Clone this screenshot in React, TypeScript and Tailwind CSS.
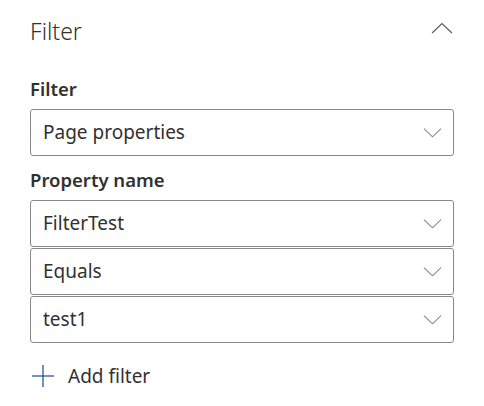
const rows = ['FilterTest', 'Equals', 'test1']

function Chevron({ up = false, className = '' }: { up?: boolean; className?: string }) {
  return (
    <svg viewBox="0 0 20 10" className={className} fill="none" stroke="currentColor" strokeWidth={1.1}>
      {up ? <polyline points="1,9.5 10,1 19,9.5" /> : <polyline points="1,0.5 10,9 19,0.5" />}
    </svg>
  )
}

function Dropdown({ value, className = '' }: { value: string; className?: string }) {
  return (
    <div
      className={`flex h-[47px] items-center justify-between rounded-[3px] border border-[#8a8886] bg-white pl-[12px] pr-[11px] ${className}`}
    >
      <span className="text-[19px] text-[#323130]">{value}</span>
      <Chevron className="h-[10px] w-[19px] text-[#8a8886]" />
    </div>
  )
}

export default function App() {
  return (
    <div className="h-[406px] w-[484px] bg-white px-[30px] pt-[13px] font-['Noto_Sans',sans-serif] text-[#323130]">
      <div className="flex items-center justify-between">
        <h1 className="text-[23px] font-light leading-[36px] text-[#323130]">Filter</h1>
        <Chevron up className="mr-[1px] mb-[7px] h-[12px] w-[22px] text-[#605e5c]" />
      </div>
      <div className="mt-[27px] text-[18.5px] font-semibold leading-[26px]">Filter</div>
      <Dropdown value="Page properties" className="mt-[7px]" />
      <div className="mt-[11px] text-[18.5px] font-semibold leading-[26px]">Property name</div>
      <div className="mt-[7px] flex flex-col gap-[1px]">
        {rows.map((r) => (
          <Dropdown key={r} value={r} />
        ))}
      </div>
      <button type="button" className="mt-[20px] flex h-[26px] items-center gap-[14px] text-[19px] text-[#323130]">
        <svg viewBox="0 0 22 22" className="ml-[2px] h-[22px] w-[22px] text-[#2b579a]" fill="none" stroke="currentColor" strokeWidth={1.3}>
          <line x1="11" y1="0" x2="11" y2="22" />
          <line x1="0" y1="11" x2="22" y2="11" />
        </svg>
        Add filter
      </button>
    </div>
  )
}
